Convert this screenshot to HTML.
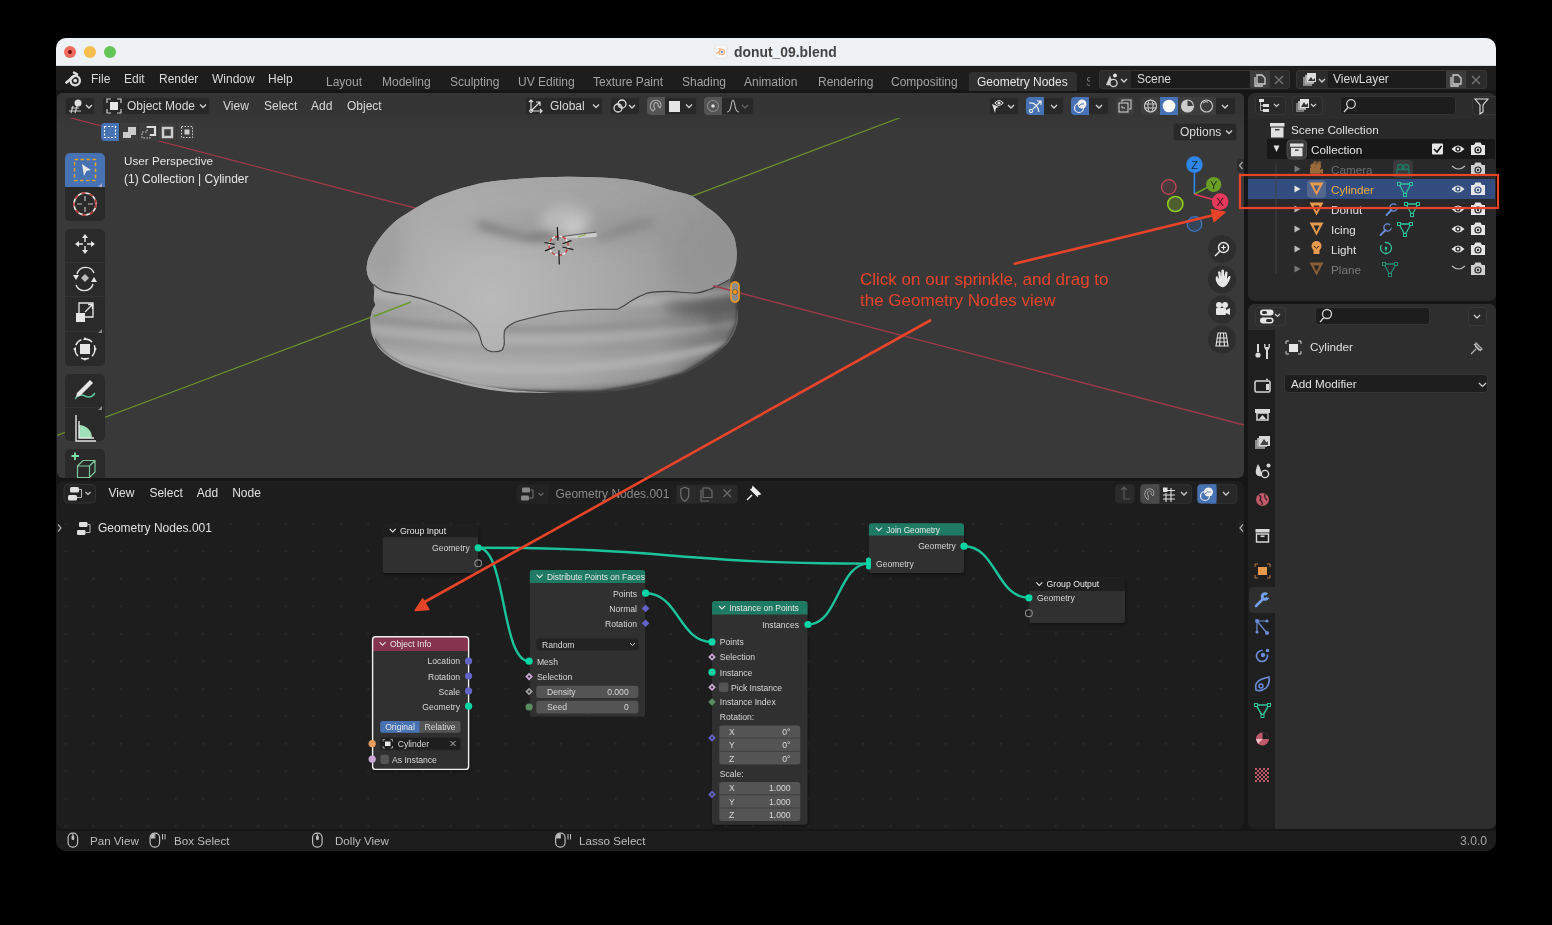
<!DOCTYPE html>
<html><head><meta charset="utf-8">
<style>
*{box-sizing:border-box;margin:0;padding:0}
html,body{width:1552px;height:925px;background:#000;overflow:hidden;font-family:"Liberation Sans",sans-serif;}
.a{position:absolute}
#win{position:absolute;left:56px;top:38px;width:1440px;height:813px;border-radius:10px;overflow:hidden;background:#161616}
#in{position:absolute;left:-56px;top:-38px;width:1552px;height:925px}
.t{position:absolute;will-change:transform;white-space:pre;color:#d9d9d9;font-size:12px;line-height:14px}
.btn{position:absolute;background:#282828;border-radius:4px;box-shadow:inset 0 0 0 1px #333}
</style></head><body>
<div id="win"><div id="in">
<!-- title bar -->
<div class="a" style="left:56px;top:38px;width:1440px;height:28px;background:#eff2f5"></div>
<div class="a" style="left:64px;top:46px;width:12px;height:12px;border-radius:50%;background:#ee6a5f"></div>
<div class="a" style="left:68px;top:50px;width:4px;height:4px;border-radius:50%;background:#7a1410"></div>
<div class="a" style="left:84px;top:46px;width:12px;height:12px;border-radius:50%;background:#f5be4f"></div>
<div class="a" style="left:104px;top:46px;width:12px;height:12px;border-radius:50%;background:#62c554"></div>
<svg class="a" style="left:714px;top:44px" width="14" height="15" viewBox="0 0 14 15"><rect x="1" y="1" width="12" height="13" rx="2" fill="#f8f8f8" stroke="#e2e2e2" stroke-width="0.8"/><circle cx="7.8" cy="8" r="2.6" fill="none" stroke="#f3b27a" stroke-width="1.2"/><path d="M2.5 9.5 L6 7 M5 4.5 L7.5 5.5" stroke="#f3b27a" stroke-width="1.2" stroke-linecap="round"/><circle cx="7.8" cy="8" r="1" fill="#4a6cc0"/></svg>
<div class="t" style="left:733.5px;top:44px;font-size:13.9px;font-weight:bold;color:#434343;line-height:16px">donut_09.blend</div>
<div class="a" style="left:56px;top:65px;width:1440px;height:1px;background:#d6d8da"></div>
<!-- top bar -->
<div class="a" style="left:56px;top:66px;width:1440px;height:24px;background:#1d1d1d"></div>


<!-- topbar content -->
<svg class="a" style="left:65px;top:71px" width="18" height="16" viewBox="0 0 18 16"><path d="M1.5 11.5 L8.5 5.5" stroke="#dedede" stroke-width="2.6" stroke-linecap="round"/><path d="M9 1.6 L12 3.4" stroke="#dedede" stroke-width="2.4" stroke-linecap="round"/><circle cx="10.2" cy="9.6" r="4.7" fill="none" stroke="#dedede" stroke-width="2.3"/><circle cx="10.2" cy="9.6" r="1.9" fill="#dedede"/></svg>
<div class="t" style="left:91px;top:72px">File</div>
<div class="t" style="left:124px;top:72px">Edit</div>
<div class="t" style="left:159px;top:72px">Render</div>
<div class="t" style="left:212px;top:72px">Window</div>
<div class="t" style="left:268px;top:72px">Help</div>
<div class="t" style="left:326px;top:74.5px;color:#a3a3a3">Layout</div>
<div class="t" style="left:382px;top:74.5px;color:#a3a3a3">Modeling</div>
<div class="t" style="left:450px;top:74.5px;color:#a3a3a3">Sculpting</div>
<div class="t" style="left:518px;top:74.5px;color:#a3a3a3">UV Editing</div>
<div class="t" style="left:593px;top:74.5px;color:#a3a3a3">Texture Paint</div>
<div class="t" style="left:682px;top:74.5px;color:#a3a3a3">Shading</div>
<div class="t" style="left:744px;top:74.5px;color:#a3a3a3">Animation</div>
<div class="t" style="left:818px;top:74.5px;color:#a3a3a3">Rendering</div>
<div class="t" style="left:891px;top:74.5px;color:#a3a3a3">Compositing</div>
<div class="a" style="left:969px;top:72px;width:108px;height:19px;background:#303030;border-radius:4px 4px 0 0"></div>
<div class="t" style="left:977px;top:74.5px;color:#e6e6e6">Geometry Nodes</div>
<div class="t" style="left:1086px;top:74.5px;color:#777;width:4px;overflow:hidden">S</div>
<!-- scene -->
<div class="a" style="left:1098.5px;top:69.5px;width:191px;height:19.5px;background:#2b2b2b;border-radius:4px;box-shadow:inset 0 0 0 1px #363636"></div>
<div class="a" style="left:1131px;top:70.5px;width:119px;height:17.5px;background:#1c1c1c"></div>
<div class="a" style="left:1250px;top:70.5px;width:20px;height:17.5px;background:#3d3d3d"></div>
<svg class="a" style="left:1103px;top:72px" width="30" height="16" viewBox="0 0 30 16"><path d="M3 13 L7 3.5 L9.5 10 Q8 13 6 13.5Z" fill="#d0d0d0"/><circle cx="12" cy="3.5" r="2" fill="#e0e0e0"/><circle cx="10.5" cy="11" r="3.6" fill="#2b2b2b" stroke="#d0d0d0" stroke-width="1.4"/><path d="M18 7 L21 10 L24 7" fill="none" stroke="#d0d0d0" stroke-width="1.4"/></svg>
<div class="t" style="left:1137px;top:72px">Scene</div>
<svg class="a" style="left:1252px;top:72px" width="16" height="16" viewBox="0 0 16 16"><path d="M5 3 H10 L13 6 V12 H5Z M3 5 V14 H11" fill="none" stroke="#d0d0d0" stroke-width="1.3"/></svg>
<svg class="a" style="left:1272px;top:73px" width="14" height="14" viewBox="0 0 14 14"><path d="M3 3 L11 11 M11 3 L3 11" stroke="#777" stroke-width="1.3"/></svg>
<div class="a" style="left:1296px;top:69.5px;width:191px;height:19.5px;background:#2b2b2b;border-radius:4px;box-shadow:inset 0 0 0 1px #363636"></div>
<div class="a" style="left:1328px;top:70.5px;width:118px;height:17.5px;background:#1c1c1c"></div>
<div class="a" style="left:1446px;top:70.5px;width:20px;height:17.5px;background:#3d3d3d"></div>
<svg class="a" style="left:1300px;top:72px" width="30" height="16" viewBox="0 0 30 16"><rect x="3" y="5" width="9" height="9" fill="#888"/><rect x="5" y="3" width="9" height="9" fill="#aaa"/><rect x="7" y="1" width="9" height="9" fill="#ddd"/><path d="M8 9 L11 5 L13 8 L15 6 V9Z" fill="#333"/><path d="M19 7 L22 10 L25 7" fill="none" stroke="#d0d0d0" stroke-width="1.4"/></svg>
<div class="t" style="left:1333px;top:72px">ViewLayer</div>
<svg class="a" style="left:1448px;top:72px" width="16" height="16" viewBox="0 0 16 16"><path d="M5 3 H10 L13 6 V12 H5Z M3 5 V14 H11" fill="none" stroke="#d0d0d0" stroke-width="1.3"/></svg>
<svg class="a" style="left:1469px;top:73px" width="14" height="14" viewBox="0 0 14 14"><path d="M3 3 L11 11 M11 3 L3 11" stroke="#777" stroke-width="1.3"/></svg>

<!-- viewport -->
<div class="a" id="vp" style="left:57px;top:93px;width:1187px;height:385px;background:#393939;border-radius:6px;overflow:hidden">
  <div class="a" style="left:0;top:0;width:1187px;height:40px;background:linear-gradient(#343434 0px,#353535 20px,#393939 36px)"></div>
</div>

<!-- viewport header content -->
<div class="btn" style="left:65px;top:97px;width:30px;height:18px"></div>
<svg class="a" style="left:67px;top:98px" width="28" height="16" viewBox="0 0 28 16"><path d="M2 13 H14 M4 10 H12 M6 8 L4 15 M10 8 L8 15" stroke="#ccc" stroke-width="1.2"/><circle cx="11" cy="5" r="3.5" fill="#ddd"/><path d="M19 7 L22 10 L25 7" fill="none" stroke="#d0d0d0" stroke-width="1.4"/></svg>
<div class="btn" style="left:102px;top:97px;width:108px;height:18px"></div>
<svg class="a" style="left:106px;top:98px" width="16" height="16" viewBox="0 0 16 16"><path d="M1 5 V1 H5 M11 1 H15 V5 M15 11 V15 H11 M5 15 H1 V11" fill="none" stroke="#ccc" stroke-width="1.2"/><rect x="4" y="4" width="8" height="8" fill="#e6e6e6"/></svg>
<div class="t" style="left:127px;top:99px">Object Mode</div>
<svg class="a" style="left:198px;top:101px" width="10" height="10" viewBox="0 0 10 10"><path d="M2 3.5 L5 6.5 L8 3.5" fill="none" stroke="#ccc" stroke-width="1.4"/></svg>
<div class="t" style="left:223px;top:99px">View</div>
<div class="t" style="left:264px;top:99px">Select</div>
<div class="t" style="left:311px;top:99px">Add</div>
<div class="t" style="left:347px;top:99px">Object</div>
<!-- center header -->
<div class="btn" style="left:525px;top:97px;width:78px;height:18px"></div>
<svg class="a" style="left:528px;top:98px" width="16" height="16" viewBox="0 0 16 16"><path d="M3 2 V13 H14 M3 13 L12 4 M1 4 L3 2 L5 4 M12 11 L14 13 L12 15 M8 4 H12 V8" fill="none" stroke="#ddd" stroke-width="1.2"/><circle cx="3" cy="13" r="1.5" fill="none" stroke="#ddd"/></svg>
<div class="t" style="left:550px;top:99px">Global</div>
<svg class="a" style="left:591px;top:101px" width="10" height="10" viewBox="0 0 10 10"><path d="M2 3.5 L5 6.5 L8 3.5" fill="none" stroke="#ccc" stroke-width="1.4"/></svg>
<div class="btn" style="left:610px;top:97px;width:30px;height:18px"></div>
<svg class="a" style="left:612px;top:98px" width="28" height="16" viewBox="0 0 28 16"><circle cx="6" cy="10" r="4" fill="none" stroke="#ddd" stroke-width="1.3"/><circle cx="10" cy="6" r="4" fill="none" stroke="#ddd" stroke-width="1.3"/><circle cx="8" cy="8" r="1" fill="#ddd"/><path d="M17 7 L20 10 L23 7" fill="none" stroke="#d0d0d0" stroke-width="1.4"/></svg>
<div class="btn" style="left:647px;top:97px;width:50px;height:18px"></div>
<div class="a" style="left:647px;top:97px;width:18px;height:18px;background:#545454;border-radius:4px 0 0 4px"></div>
<svg class="a" style="left:648px;top:98px" width="16" height="16" viewBox="0 0 16 16"><path d="M5 13 L3 11 Q1 6 5 3 Q9 1 12 4 Q14 7 12 10 L10 8 Q11 6 9 5 Q7 4 6 6 Q5 8 7 11Z" fill="none" stroke="#aaa" stroke-width="1.1"/></svg>
<div class="a" style="left:669px;top:101px;width:11px;height:11px;background:#e6e6e6"></div>
<svg class="a" style="left:684px;top:101px" width="10" height="10" viewBox="0 0 10 10"><path d="M2 3.5 L5 6.5 L8 3.5" fill="none" stroke="#ccc" stroke-width="1.4"/></svg>
<div class="btn" style="left:704px;top:97px;width:50px;height:18px"></div>
<div class="a" style="left:704px;top:97px;width:18px;height:18px;background:#545454;border-radius:4px 0 0 4px"></div>
<svg class="a" style="left:705px;top:98px" width="16" height="16" viewBox="0 0 16 16"><circle cx="8" cy="8" r="5.5" fill="none" stroke="#888" stroke-width="1.1"/><circle cx="8" cy="8" r="1.8" fill="#ddd"/></svg>
<svg class="a" style="left:726px;top:98px" width="28" height="16" viewBox="0 0 28 16"><path d="M1 14 Q4 14 5 8 Q6 2 7 2 Q8 2 9 8 Q10 14 13 14" fill="none" stroke="#bbb" stroke-width="1.1"/><path d="M16 7 L19 10 L22 7" fill="none" stroke="#666" stroke-width="1.2"/></svg>
<!-- right header -->
<div class="btn" style="left:989px;top:97px;width:30px;height:18px"></div>
<svg class="a" style="left:990px;top:98px" width="28" height="16" viewBox="0 0 28 16"><path d="M2 6 L9 9 L6 10 L5 15Z" fill="#ddd"/><path d="M5 5 Q9 0 13 5 Q9 10 5 5Z" fill="none" stroke="#ddd" stroke-width="1.2"/><circle cx="9" cy="5" r="1.6" fill="#ddd"/><path d="M18 7 L21 10 L24 7" fill="none" stroke="#d0d0d0" stroke-width="1.4"/></svg>
<div class="btn" style="left:1026px;top:97px;width:38px;height:18px"></div>
<div class="a" style="left:1026px;top:97px;width:18px;height:18px;background:#4772b3;border-radius:4px 0 0 4px"></div>
<svg class="a" style="left:1027px;top:98px" width="36" height="16" viewBox="0 0 36 16"><path d="M2 5 Q10 4 12 14" fill="none" stroke="#eee" stroke-width="1.2"/><circle cx="4" cy="13" r="1.6" fill="none" stroke="#eee" stroke-width="1.1"/><path d="M6 11 L14 3 M10 3 H14 V7" fill="none" stroke="#eee" stroke-width="1.2"/><path d="M24 7 L27 10 L30 7" fill="none" stroke="#d0d0d0" stroke-width="1.4"/></svg>
<div class="btn" style="left:1071px;top:97px;width:38px;height:18px"></div>
<div class="a" style="left:1071px;top:97px;width:18px;height:18px;background:#4772b3;border-radius:4px 0 0 4px"></div>
<svg class="a" style="left:1072px;top:98px" width="36" height="16" viewBox="0 0 36 16"><circle cx="7" cy="10" r="4.5" fill="none" stroke="#eee" stroke-width="1.2"/><circle cx="10" cy="6" r="4.5" fill="#eee"/><path d="M7 8 Q9 5 12 6" stroke="#4772b3" stroke-width="1" fill="none"/><path d="M24 7 L27 10 L30 7" fill="none" stroke="#d0d0d0" stroke-width="1.4"/></svg>
<div class="a" style="left:1116px;top:97px;width:18px;height:18px;background:#3d3d3d;border-radius:4px"></div>
<svg class="a" style="left:1117px;top:98px" width="16" height="16" viewBox="0 0 16 16"><path d="M5 4 V2 H14 V11 H12" fill="none" stroke="#ccc" stroke-width="1.1"/><rect x="2" y="5" width="9" height="9" fill="none" stroke="#ccc" stroke-width="1.1"/><path d="M5 8 V10 H8" stroke="#ccc" stroke-width="1" fill="none"/></svg>
<div class="btn" style="left:1141px;top:97px;width:95px;height:18px"></div>
<div class="a" style="left:1141px;top:97px;width:19px;height:18px;background:#3d3d3d;border-radius:4px 0 0 4px"></div>
<div class="a" style="left:1160px;top:97px;width:18px;height:18px;background:#4772b3"></div>
<div class="a" style="left:1178px;top:97px;width:38px;height:18px;background:#3d3d3d"></div>
<svg class="a" style="left:1142px;top:98px" width="94" height="16" viewBox="0 0 94 16"><circle cx="8.5" cy="8" r="6" fill="none" stroke="#ccc" stroke-width="1.1"/><ellipse cx="8.5" cy="8" rx="2.6" ry="6" fill="none" stroke="#ccc" stroke-width="1"/><path d="M2.5 6 H14.5 M2.5 10 H14.5" stroke="#ccc" stroke-width="1"/><circle cx="27" cy="8" r="6.3" fill="#fff"/><circle cx="45.5" cy="8" r="6" fill="none" stroke="#ccc" stroke-width="1.1"/><path d="M45.5 2 V8 H51.5 A6 6 0 0 1 45.5 14 A6 6 0 0 1 39.5 8 A6 6 0 0 1 45.5 2Z" fill="#ccc"/><circle cx="64.5" cy="8" r="6" fill="none" stroke="#ccc" stroke-width="1.1"/><path d="M61 5 Q63 3 66 4" stroke="#ccc" fill="none"/><path d="M80 7 L83 10 L86 7" fill="none" stroke="#d0d0d0" stroke-width="1.4"/></svg>
<div class="btn" style="left:1173px;top:123px;width:64px;height:18px"></div>
<div class="t" style="left:1180px;top:125px">Options</div>
<svg class="a" style="left:1224px;top:127px" width="10" height="10" viewBox="0 0 10 10"><path d="M2 3.5 L5 6.5 L8 3.5" fill="none" stroke="#ccc" stroke-width="1.4"/></svg>
<!-- viewport scene svg -->
<svg class="a" style="left:57px;top:93px" width="1187" height="385" viewBox="57 93 1187 385">
<defs>
<clipPath id="vpc"><rect x="57" y="118" width="1187" height="360"/></clipPath>
<filter id="bl3" filterUnits="userSpaceOnUse" x="300" y="120" width="500" height="330"><feGaussianBlur stdDeviation="3"/></filter>
<filter id="bl6" filterUnits="userSpaceOnUse" x="300" y="120" width="500" height="330"><feGaussianBlur stdDeviation="6"/></filter>
<filter id="bl10" filterUnits="userSpaceOnUse" x="300" y="120" width="500" height="330"><feGaussianBlur stdDeviation="10"/></filter>
<filter id="bl1" filterUnits="userSpaceOnUse" x="300" y="120" width="500" height="330"><feGaussianBlur stdDeviation="0.8"/></filter>
<linearGradient id="bodyg" x1="0" y1="0" x2="1" y2="0">
<stop offset="0" stop-color="#9c9c9c"/><stop offset="0.3" stop-color="#adadad"/><stop offset="0.62" stop-color="#a9a9a9"/><stop offset="0.85" stop-color="#939393"/><stop offset="1" stop-color="#6a6a6a"/>
</linearGradient>
<radialGradient id="icg" cx="0.42" cy="0.72" r="0.7">
<stop offset="0" stop-color="#bcbcbc"/><stop offset="0.5" stop-color="#acacac"/><stop offset="1" stop-color="#949494"/>
</radialGradient>
<clipPath id="bodyclip"><path id="bodyp" d="M367.6,268 C366,258 372,244 382,233 C392,222 404,214 431,198 C450,188 480,180 512,177.6 C540,175.5 575,174 621,179 C645,182 670,188 691,195 C705,202 725,215 732,230 C737,243 737,258 736,268 C735,276 733,280 729,284 C735,292 738,300 737,306 C737,318 736,327 734.6,327.6 C730,340 725,345 721,349 C712,358 705,362 694,368 C680,376 665,381 653.5,384 C635,389 620,391 607.6,392.4 C590,394 575,394 560,393 C540,392 525,391 512,390 C495,388 485,386 471.6,384 C455,381 445,377 431,373.5 C418,369 405,365 396,360 C385,353 380,348 377,344 C373,335 371.6,328 371.6,322 C371.6,315 373,310 373,306 C374,298 374,294 374,290 C372,285 369,275 367.6,268Z"/></clipPath>
</defs>
<g clip-path="url(#vpc)">
<!-- axis lines -->
<line x1="57" y1="114.3" x2="1244" y2="425" stroke="#9b3a48" stroke-width="1.3"/>
<line x1="57" y1="435.5" x2="900" y2="117.7" stroke="#6b8a2c" stroke-width="1.3"/>
<!-- donut body -->
<defs>
<clipPath id="bodyclip"><path d="M367,264.5 C366,270 367,279 373.7,284.4 C375,288 374,295 373.7,299.4 C374,302 375.5,304 375,305.6 C373,309 371,312 371.2,314.3 C370,318 370,322 370.4,324 C370.5,330 371.5,335 373.7,339 C377,346 380,350 384.9,354 C392,360 398,363 404.8,366.5 C415,371 425,374 434.6,376.5 C447,380 460,384 472,386.4 C490,390 505,392 520,392.6 C550,393.5 580,392.5 600,391.4 C607,391 613,390.7 620,390 C630,388 640,386 649.8,384 C661,380.5 672,377 682,374 C692,369.5 701,364 709.5,359 C716,354 721,349 726.9,344 C731,339 733.5,334 735.6,329.2 C737,325 738,322 738,319.3 C738,313 737.5,308 736.8,304.3 C735,295 732,285 729.4,279.5 C731,276 733,272 734.3,269.5 C735.5,266 736.3,264 736.3,262 C736.8,258 737,255 736.8,252 C736.5,247 735.5,241 734.3,237.2 C731.5,231 728,226 724.4,222.2 C719,216 713,211 707,207.3 C702,203 697,199 692,196 C685,193 677,191.5 669.7,189.9 C659,187 648,183 637.3,181.2 C625,179 612,178 600,177.5 C573,176 547,176.5 520,178.7 C508,179.5 496,180.5 484.4,182.4 C476,184 468,186.5 459.5,188.7 C451,191.5 443,194 434.6,197.4 C428,200.5 421,204.5 414.7,208.6 C409,212 403,216 397.3,219.8 C392,224 387,229 382.4,234.7 C378,240 374,246 371.2,252 C369,256 367.5,260 367,264.5Z"/></clipPath>
<clipPath id="icclip"><path d="M367,264.5 C366,270 367,279 373.7,284.4 C376,287 379,289 382.4,290.6 C391,293 400,294 409.8,295.6 C418,297.5 426,300 434.6,303 C441,305.5 448,308.5 454.5,311.8 C460,315 465,318 469.5,321.7 C473,325 476,328 478.2,331.7 C480,336 481,340 481.9,344 C484,348 487,351 491.8,351.6 C496,352 499.5,351.5 501.8,350.3 C504,347.5 504.5,345 504.3,341.6 C504,338 504,335 504.3,331.7 C505,329 507,327 509.3,325.5 C512,323.5 516,321.5 520,320.5 C530,318.5 545,314 560,311.5 C575,310 590,309.5 600,309.3 C605,309.3 611,309.3 617.4,309.3 C622,307.5 626,304.5 629.9,301.8 C635,298.5 641,295.5 647.3,293.1 C654,291.5 662,291.2 669.7,291.4 C678,291.8 686,292.8 694.5,293.1 C700,293 705,291 709.5,289.4 C716,287 723,283 729.4,279.5 C731,276 733,272 734.3,269.5 C735.5,266 736.3,264 736.3,262 C736.8,258 737,255 736.8,252 C736.5,247 735.5,241 734.3,237.2 C731.5,231 728,226 724.4,222.2 C719,216 713,211 707,207.3 C702,203 697,199 692,196 C685,193 677,191.5 669.7,189.9 C659,187 648,183 637.3,181.2 C625,179 612,178 600,177.5 C573,176 547,176.5 520,178.7 C508,179.5 496,180.5 484.4,182.4 C476,184 468,186.5 459.5,188.7 C451,191.5 443,194 434.6,197.4 C428,200.5 421,204.5 414.7,208.6 C409,212 403,216 397.3,219.8 C392,224 387,229 382.4,234.7 C378,240 374,246 371.2,252 C369,256 367.5,260 367,264.5Z"/></clipPath>
<linearGradient id="bodyg2" x1="367" y1="0" x2="738" y2="0" gradientUnits="userSpaceOnUse">
<stop offset="0" stop-color="#9e9e9e"/><stop offset="0.25" stop-color="#aaaaaa"/><stop offset="0.55" stop-color="#a6a6a6"/><stop offset="0.78" stop-color="#989898"/><stop offset="0.92" stop-color="#828282"/><stop offset="1" stop-color="#606060"/>
</linearGradient>
<radialGradient id="rdark" cx="745" cy="325" r="85" gradientUnits="userSpaceOnUse"><stop offset="0" stop-color="#555" stop-opacity="0.75"/><stop offset="0.6" stop-color="#666" stop-opacity="0.35"/><stop offset="1" stop-color="#777" stop-opacity="0"/></radialGradient>
<radialGradient id="icg2" cx="490" cy="300" r="260" gradientUnits="userSpaceOnUse">
<stop offset="0" stop-color="#bababa"/><stop offset="0.35" stop-color="#adadad"/><stop offset="0.7" stop-color="#9e9e9e"/><stop offset="1" stop-color="#939393"/>
</radialGradient>
</defs>
<path d="M367,264.5 C366,270 367,279 373.7,284.4 C375,288 374,295 373.7,299.4 C374,302 375.5,304 375,305.6 C373,309 371,312 371.2,314.3 C370,318 370,322 370.4,324 C370.5,330 371.5,335 373.7,339 C377,346 380,350 384.9,354 C392,360 398,363 404.8,366.5 C415,371 425,374 434.6,376.5 C447,380 460,384 472,386.4 C490,390 505,392 520,392.6 C550,393.5 580,392.5 600,391.4 C607,391 613,390.7 620,390 C630,388 640,386 649.8,384 C661,380.5 672,377 682,374 C692,369.5 701,364 709.5,359 C716,354 721,349 726.9,344 C731,339 733.5,334 735.6,329.2 C737,325 738,322 738,319.3 C738,313 737.5,308 736.8,304.3 C735,295 732,285 729.4,279.5 C731,276 733,272 734.3,269.5 C735.5,266 736.3,264 736.3,262 C736.8,258 737,255 736.8,252 C736.5,247 735.5,241 734.3,237.2 C731.5,231 728,226 724.4,222.2 C719,216 713,211 707,207.3 C702,203 697,199 692,196 C685,193 677,191.5 669.7,189.9 C659,187 648,183 637.3,181.2 C625,179 612,178 600,177.5 C573,176 547,176.5 520,178.7 C508,179.5 496,180.5 484.4,182.4 C476,184 468,186.5 459.5,188.7 C451,191.5 443,194 434.6,197.4 C428,200.5 421,204.5 414.7,208.6 C409,212 403,216 397.3,219.8 C392,224 387,229 382.4,234.7 C378,240 374,246 371.2,252 C369,256 367.5,260 367,264.5Z" fill="url(#bodyg2)"/>
<g clip-path="url(#bodyclip)">
<rect x="600" y="270" width="150" height="130" fill="url(#rdark)"/>
<g filter="url(#bl3)">
<path d="M365 292 Q555 318 745 290" stroke="#b9b9b9" stroke-width="8" fill="none" opacity="0.7"/>
<path d="M365 318 Q555 343 745 312" stroke="#878787" stroke-width="5" fill="none" opacity="0.85"/>
<path d="M365 329 Q555 354 745 322" stroke="#b4b4b4" stroke-width="5" fill="none" opacity="0.8"/>
<path d="M365 338 Q555 366 745 330" stroke="#939393" stroke-width="4" fill="none" opacity="0.75"/>
<path d="M365 352 Q555 392 745 340" stroke="#b6b6b6" stroke-width="9" fill="none" opacity="0.8"/>
</g>
<g filter="url(#bl6)">
<path d="M660 302 C690 302 715 300 745 292 L745 316 C725 318 700 316 675 312Z" fill="#5a5a5a" opacity="0.7"/>
<path d="M708 302 L718 332" stroke="#4a4a4a" stroke-width="6" fill="none" opacity="0.5"/>
</g>
<g filter="url(#bl3)">
<path d="M470,392 C520,396 600,394 661,383 C690,375 716,356 728,344 C735,334 740,322 740,310" stroke="#505050" stroke-width="8" fill="none" opacity="0.5"/>
</g>
<path d="M373.7,339 C377,346 380,350 384.9,354 C392,360 398,363 404.8,366.5 C425,374 447,380 472,386.4 C505,392 550,393.5 600,391.4 C630,388 661,380.5 682,374 C701,364 716,354 726.9,344 C733.5,334 738,322 738,319.3 C738,313 737.5,308 736.8,304.3" stroke="#3e3e3e" stroke-width="3" fill="none" filter="url(#bl1)"/>
</g>
<path d="M367,264.5 C366,270 367,279 373.7,284.4 C376,287 379,289 382.4,290.6 C391,293 400,294 409.8,295.6 C418,297.5 426,300 434.6,303 C441,305.5 448,308.5 454.5,311.8 C460,315 465,318 469.5,321.7 C473,325 476,328 478.2,331.7 C480,336 481,340 481.9,344 C484,348 487,351 491.8,351.6 C496,352 499.5,351.5 501.8,350.3 C504,347.5 504.5,345 504.3,341.6 C504,338 504,335 504.3,331.7 C505,329 507,327 509.3,325.5 C512,323.5 516,321.5 520,320.5 C530,318.5 545,314 560,311.5 C575,310 590,309.5 600,309.3 C605,309.3 611,309.3 617.4,309.3 C622,307.5 626,304.5 629.9,301.8 C635,298.5 641,295.5 647.3,293.1 C654,291.5 662,291.2 669.7,291.4 C678,291.8 686,292.8 694.5,293.1 C700,293 705,291 709.5,289.4 C716,287 723,283 729.4,279.5 C731,276 733,272 734.3,269.5 C735.5,266 736.3,264 736.3,262 C736.8,258 737,255 736.8,252 C736.5,247 735.5,241 734.3,237.2 C731.5,231 728,226 724.4,222.2 C719,216 713,211 707,207.3 C702,203 697,199 692,196 C685,193 677,191.5 669.7,189.9 C659,187 648,183 637.3,181.2 C625,179 612,178 600,177.5 C573,176 547,176.5 520,178.7 C508,179.5 496,180.5 484.4,182.4 C476,184 468,186.5 459.5,188.7 C451,191.5 443,194 434.6,197.4 C428,200.5 421,204.5 414.7,208.6 C409,212 403,216 397.3,219.8 C392,224 387,229 382.4,234.7 C378,240 374,246 371.2,252 C369,256 367.5,260 367,264.5Z" fill="url(#icg2)"/>
<g clip-path="url(#icclip)">
<g filter="url(#bl10)">
<ellipse cx="700" cy="255" rx="35" ry="40" fill="#929292" opacity="0.7"/>
<ellipse cx="385" cy="250" rx="18" ry="35" fill="#9a9a9a" opacity="0.6"/>
<ellipse cx="600" cy="188" rx="110" ry="10" fill="#a6a6a6" opacity="0.5"/>
<ellipse cx="650" cy="230" rx="40" ry="12" fill="#999" opacity="0.6"/>
</g>
<g filter="url(#bl10)">
<path d="M440 225 C480 228 515 234 540 240 L600 240 C620 234 650 228 680 224 C640 214 600 212 560 212 C510 213 470 218 440 225Z" fill="#8e8e8e" opacity="0.55"/>
</g>
<g filter="url(#bl6)">
<ellipse cx="566" cy="220" rx="26" ry="15" fill="#bcbcbc" opacity="0.9"/>
</g>
<filter id="bl4" filterUnits="userSpaceOnUse" x="300" y="120" width="500" height="330"><feGaussianBlur stdDeviation="4.2"/></filter>
<g filter="url(#bl4)">
<ellipse cx="573" cy="226" rx="10" ry="8" fill="#c8c8c8" opacity="0.9"/>
<path d="M480 221 C497 226 515 231 529 235 L545 239 L525 241 C510 237 490 232 476 228Z" fill="#6e6e6e" opacity="0.7"/>
<path d="M597 237 C610 230 625 224 650 218 L654 225 C630 231 612 238 600 241Z" fill="#7c7c7c" opacity="0.65"/>
<ellipse cx="542" cy="237" rx="16" ry="3" fill="#555" opacity="0.7"/>
</g>
</g>
<path d="M373.7,284.4 C376,287 379,289 382.4,290.6 C391,293 400,294 409.8,295.6 C418,297.5 426,300 434.6,303 C441,305.5 448,308.5 454.5,311.8 C460,315 465,318 469.5,321.7 C473,325 476,328 478.2,331.7 C480,336 481,340 481.9,344 C484,348 487,351 491.8,351.6 C496,352 499.5,351.5 501.8,350.3 C504,347.5 504.5,345 504.3,341.6 C504,338 504,335 504.3,331.7 C505,329 507,327 509.3,325.5 C512,323.5 516,321.5 520,320.5 C530,318.5 545,314 560,311.5 C575,310 590,309.5 600,309.3 C605,309.3 611,309.3 617.4,309.3 C622,307.5 626,304.5 629.9,301.8 C635,298.5 641,295.5 647.3,293.1 C654,291.5 662,291.2 669.7,291.4 C678,291.8 686,292.8 694.5,293.1 C700,293 705,291 709.5,289.4 C716,287 723,283 729.4,279.5" fill="none" stroke="#444" stroke-width="1.1"/>
<path d="M562.5 236.7 C575 235 588 233 596 232.2 C597.5 234 597 236 596 236.9 C585 237.5 572 238.2 563.8 238.6Z" fill="#cbcbcb"/>
<path d="M555 237.5 C570 235.5 586 233.2 596 232.2" stroke="#505050" stroke-width="0.9" fill="none"/>
<line x1="578" y1="237" x2="586" y2="234.5" stroke="#8cb050" stroke-width="1.1"/>
<!-- axis over donut -->
<line x1="373.5" y1="316.5" x2="410.8" y2="302" stroke="#6b9a2c" stroke-width="1.4"/>
<line x1="713" y1="285.7" x2="738" y2="292.2" stroke="#9b3a48" stroke-width="1.4"/>
<!-- 3d cursor -->
<circle cx="558.6" cy="245.7" r="9.6" fill="none" stroke="#e8e8e8" stroke-width="1.4" stroke-dasharray="3.77 3.77"/>
<circle cx="558.6" cy="245.7" r="9.6" fill="none" stroke="#d03a3a" stroke-width="1.4" stroke-dasharray="3.77 3.77" stroke-dashoffset="3.77"/>
<path d="M557.3 227 L558 240.6 M558.9 250.2 L559.3 264.4 M544.4 242.5 L554.7 244.4 M545 250.9 L554.7 247 M562.5 243.8 L571.5 240.6 M562.5 247 L573.4 249.6" stroke="#1a1a1a" stroke-width="1.2"/>
<!-- sprinkle object -->
<rect x="731" y="282" width="8" height="20" rx="4" fill="#8c8c8c" stroke="#f39a1e" stroke-width="1.6"/>
<circle cx="735" cy="292" r="2.4" fill="#f39a1e" stroke="#3a2a10" stroke-width="0.5"/>
</g>
<!-- gizmo -->
<circle cx="1168.8" cy="187" r="7.3" fill="#4b3a3e" stroke="#c74659" stroke-width="1.3"/>
<circle cx="1175.3" cy="204" r="7.6" fill="#4f5f30" stroke="#8fd11a" stroke-width="1.5"/>
<circle cx="1194.5" cy="224" r="7.3" fill="#364559" stroke="#3a78c8" stroke-width="1.3"/>
<line x1="1194.3" y1="194.3" x2="1194.5" y2="170" stroke="#2f86e6" stroke-width="1.6"/>
<line x1="1194.3" y1="194.3" x2="1208" y2="187" stroke="#6a9f25" stroke-width="1.6"/>
<line x1="1194.3" y1="194.3" x2="1213" y2="199.5" stroke="#e6385a" stroke-width="1.6"/>
<circle cx="1194.5" cy="164.6" r="8.3" fill="#2f86e6"/>
<circle cx="1213.7" cy="184.5" r="7.6" fill="#6a9f25"/>
<circle cx="1220.2" cy="201.6" r="8.3" fill="#e6385a"/>
<text x="1194.5" y="168.6" font-family="Liberation Sans" font-size="11" text-anchor="middle" fill="#0f2740">Z</text>
<text x="1213.7" y="188.5" font-family="Liberation Sans" font-size="11" text-anchor="middle" fill="#1f3208">Y</text>
<text x="1220.2" y="205.6" font-family="Liberation Sans" font-size="11" text-anchor="middle" fill="#42101b">X</text>
<!-- nav buttons -->
<circle cx="1222" cy="249" r="14" fill="#2e2e2e"/>
<circle cx="1222" cy="279.5" r="14" fill="#2e2e2e"/>
<circle cx="1222" cy="309.5" r="14" fill="#2e2e2e"/>
<circle cx="1222" cy="339.5" r="14" fill="#2e2e2e"/>
<g stroke="#e6e6e6" fill="none" stroke-width="1.5">
<circle cx="1223.5" cy="247.5" r="5"/><path d="M1219.8 251.2 L1215 256"/><path d="M1223.5 245 V250 M1221 247.5 H1226" stroke-width="1.2"/>
</g>
<path d="M1216 281 Q1215 277 1217 276 L1219 279 L1218 272 Q1219 270.5 1220.5 272 L1221 277 L1221.5 270 Q1223 269 1224 270.5 L1224 277 L1225.5 271.5 Q1227 271 1227.5 272.5 L1227 279 L1229 276 Q1231 275.5 1230.5 277.5 Q1228 285 1224 287 Q1219 288 1216 281Z" fill="#e6e6e6"/>
<g fill="#e6e6e6"><circle cx="1219" cy="305" r="3"/><circle cx="1225" cy="305" r="3"/><rect x="1216" y="308" width="10" height="7" rx="1"/><path d="M1226 310 L1230 308 V315 L1226 313Z"/></g>
<path d="M1216 346 L1218 333 H1226 L1228 346Z M1217 338 H1227 M1216.5 342 H1227.5 M1220.5 333 L1219.5 346 M1223.5 333 L1224.5 346" fill="none" stroke="#e6e6e6" stroke-width="1.1"/>
<!-- collapse tab -->
<path d="M1244 159 h-5 a2 2 0 0 0 -2 2 v9 a2 2 0 0 0 2 2 h5Z" fill="#2c2c2c"/>
<path d="M1242.5 162 L1239.5 165.5 L1242.5 169" fill="none" stroke="#aaa" stroke-width="1.2"/>
</svg>
<!-- select mode buttons -->
<div class="a" style="left:101px;top:123px;width:94px;height:18px;background:#3d3d3d;border-radius:4px"></div>
<div class="a" style="left:101px;top:123px;width:18px;height:18px;background:#4772b3;border-radius:4px 0 0 4px"></div>
<div class="a" style="left:119px;top:123px;width:1px;height:18px;background:#333"></div>
<div class="a" style="left:138px;top:123px;width:1px;height:18px;background:#333"></div>
<div class="a" style="left:157px;top:123px;width:1px;height:18px;background:#333"></div>
<div class="a" style="left:176px;top:123px;width:1px;height:18px;background:#333"></div>
<svg class="a" style="left:101px;top:123px" width="94" height="18" viewBox="0 0 94 18"><rect x="3.5" y="3.5" width="11" height="11" fill="none" stroke="#fff" stroke-width="1.2" stroke-dasharray="2 1.5"/><path d="M22 9 H27 V4 H35 V12 H30 V15 H22Z" fill="#ccc"/><path d="M41 9 H46 V4 H54 V12 H49 V15 H41Z" fill="none" stroke="#ccc" stroke-width="1.1" stroke-dasharray="1.6 1.4"/><path d="M46 4 H54 V12 H49" fill="none" stroke="#ddd" stroke-width="2.2"/><rect x="62" y="5" width="9" height="9" fill="none" stroke="#ccc" stroke-width="2.5"/><rect x="65" y="8" width="3" height="3" fill="#3d3d3d"/><rect x="80.5" y="3.5" width="11" height="11" fill="none" stroke="#ccc" stroke-width="1" stroke-dasharray="1.6 1.4"/><rect x="83.5" y="6.5" width="5" height="5" fill="#ccc"/></svg>


<!-- overlay text -->
<div class="t" style="left:124px;top:154px;font-size:11.7px;color:#e6e6e6">User Perspective</div>
<div class="t" style="left:124px;top:171.5px;font-size:12px;color:#e6e6e6">(1) Collection | Cylinder</div>
<!-- toolbar -->
<div class="a" style="left:65px;top:153px;width:40px;height:68px;background:#2a2a2a;border-radius:5px"></div>
<div class="a" style="left:65px;top:153px;width:40px;height:34px;background:#4772b3;border-radius:5px 5px 0 0"></div>
<div class="a" style="left:65px;top:229px;width:40px;height:137px;background:#2a2a2a;border-radius:5px"></div>
<div class="a" style="left:65px;top:262px;width:40px;height:1px;background:#333"></div>
<div class="a" style="left:65px;top:296px;width:40px;height:1px;background:#333"></div>
<div class="a" style="left:65px;top:331px;width:40px;height:1px;background:#333"></div>
<div class="a" style="left:65px;top:374px;width:40px;height:67px;background:#2a2a2a;border-radius:5px"></div>
<div class="a" style="left:65px;top:407px;width:40px;height:1px;background:#333"></div>
<div class="a" style="left:65px;top:449px;width:40px;height:29px;background:#2a2a2a;border-radius:5px 5px 0 0"></div>
<svg class="a" style="left:65px;top:153px" width="40" height="325" viewBox="0 0 40 325">
<rect x="9.5" y="6.5" width="21" height="21" fill="none" stroke="#f0a41e" stroke-width="1.5" stroke-dasharray="3.5 2.5"/>
<path d="M17 11 L26 17 L21.5 18 L19 23Z" fill="#e6e6e6"/>
<path d="M37 30 L33 34 H37Z" fill="#aac"/>
<circle cx="20" cy="51" r="11" fill="none" stroke="#e6e6e6" stroke-width="1.6"/>
<circle cx="20" cy="51" r="11" fill="none" stroke="#b83333" stroke-width="1.6" stroke-dasharray="4 4"/>
<path d="M20 43 V48 M20 54 V59 M12 51 H17 M23 51 H28" stroke="#bbb" stroke-width="1.2"/>
<g fill="#e6e6e6"><path d="M20 81 L17 85 H23Z M20 101 L17 97 H23Z M10 91 L14 88 V94Z M30 91 L26 88 V94Z"/></g>
<path d="M20 85 V89 M20 93 V97 M14 91 H18 M22 91 H26" stroke="#e6e6e6" stroke-width="1.4"/>
<path d="M12 121 A9 9 0 0 1 29 120 M28 131 A9 9 0 0 1 11 132" fill="none" stroke="#e6e6e6" stroke-width="1.4"/>
<path d="M8 122 L14 122 L11 127Z M26 129 L32 129 L29 124Z" fill="#e6e6e6"/>
<path d="M20 121 L24 125 L20 129 L16 125Z" fill="#bbb"/>
<rect x="11" y="160" width="9" height="9" fill="#e6e6e6"/>
<path d="M14 160 V150 H28 V164 H20" fill="none" stroke="#e6e6e6" stroke-width="1.3"/>
<path d="M20 159 L27 152 M23 151.5 H27.5 V156" fill="none" stroke="#e6e6e6" stroke-width="1.3"/>
<path d="M37 176 L33 180 H37Z" fill="#888"/>
<circle cx="20" cy="196" r="10" fill="none" stroke="#e6e6e6" stroke-width="1.4" stroke-dasharray="8 3.7"/>
<rect x="15" y="191" width="10" height="10" fill="#e6e6e6"/>
<path d="M20 184 L18 187 H22Z M20 208 L18 205 H22Z M8 196 L11 194 V198Z M32 196 L29 194 V198Z" fill="#e6e6e6"/>
<path d="M10 246 Q14 240 20 243 Q26 246 30 240" fill="none" stroke="#5fc9a0" stroke-width="1.4"/>
<path d="M12 240 L25 227 L28 230 L15 243 L11 244Z" fill="#e6e6e6"/>
<path d="M37 253 L33 257 H37Z" fill="#888"/>
<path d="M11 262 V288 H31" fill="none" stroke="#e6e6e6" stroke-width="1.4"/>
<path d="M14 285 V272 A13 13 0 0 1 27 285Z" fill="#9fe0b9"/>
<path d="M14 268 V285 H29" fill="none" stroke="#e6e6e6" stroke-width="1.4"/>
<path d="M10 299.5 V307 M6.5 303 H14" stroke="#7ee0a8" stroke-width="1.8"/>
<path d="M12.5 313 L18 307.5 H30 V319 L24.5 324.5 H12.5Z M12.5 313 H24.5 V324.5 M24.5 313 L30 307.5" fill="none" stroke="#7ec79a" stroke-width="1.2"/>
</svg>
<!-- outliner -->
<div class="a" style="left:1248px;top:93px;width:248px;height:208px;background:#292929;border-radius:7px;overflow:hidden">
  <div class="a" style="left:0;top:0;width:248px;height:26px;background:#2c2c2c"></div>
</div>
<div class="btn" style="left:1255px;top:96px;width:31px;height:19px;background:#292929;box-shadow:inset 0 0 0 1px #363636"></div>
<div class="btn" style="left:1292px;top:96px;width:31px;height:19px;background:#292929;box-shadow:inset 0 0 0 1px #363636"></div>
<div class="btn" style="left:1340px;top:96px;width:116px;height:19px;background:#1d1d1d;box-shadow:inset 0 0 0 1px #333"></div>
<div class="btn" style="left:1472px;top:96px;width:30px;height:19px;background:#292929;box-shadow:inset 0 0 0 1px #363636"></div>
<div class="a" style="left:1267px;top:139px;width:228px;height:20px;background:#181818"></div>
<div class="a" style="left:1248px;top:179px;width:247px;height:20px;background:#334d80"></div>
<svg class="a" style="left:1248px;top:93px" width="248" height="205" viewBox="1248 93 248 205">
<g fill="#e0e0e0"><rect x="1259" y="99" width="5" height="3"/><rect x="1263" y="104" width="6" height="3"/><rect x="1263" y="109" width="6" height="3"/></g>
<path d="M1260.5 102 V110.5 H1263 M1260.5 105.5 H1263" stroke="#aaa" fill="none" stroke-width="1"/>
<path d="M1274 104 L1276.5 106.5 L1279 104" fill="none" stroke="#ccc" stroke-width="1.2"/>
<rect x="1296" y="103" width="8" height="9" fill="#777"/><rect x="1298" y="101" width="8" height="9" fill="#aaa"/><rect x="1300" y="99" width="9" height="9" fill="#e0e0e0"/><path d="M1301 107 L1304 102 L1306 105 L1308 103 V107Z" fill="#333"/>
<path d="M1311 104 L1313.5 106.5 L1316 104" fill="none" stroke="#ccc" stroke-width="1.2"/>
<circle cx="1351" cy="104" r="4.3" fill="none" stroke="#d0d0d0" stroke-width="1.3"/><path d="M1348 107.5 L1344 112" stroke="#d0d0d0" stroke-width="1.3"/>
<path d="M1475 99 H1488 L1483 105 V112 L1480 114 V105Z" fill="none" stroke="#e0e0e0" stroke-width="1.1"/>
<circle cx="1497" cy="105" r="0.8" fill="#aaa"/>
<!-- scene collection -->
<rect x="1270" y="123" width="14.5" height="3.5" fill="#e0e0e0"/><rect x="1271" y="127.5" width="12.5" height="10" fill="#e0e0e0"/><rect x="1275" y="129" width="4.5" height="1.4" fill="#333"/>
<!-- collection -->
<path d="M1273.5 145.5 H1279.5 L1276.5 152Z" fill="#e0e0e0"/>
<rect x="1287" y="140" width="19.5" height="19" rx="4" fill="#3a3a3a" stroke="#555" stroke-width="0.8"/>
<rect x="1290" y="143.5" width="13.5" height="3.2" fill="#e0e0e0"/><rect x="1291" y="147.8" width="11.5" height="8.5" fill="#e0e0e0"/><rect x="1295" y="149.5" width="3.5" height="1.3" fill="#333"/>
<rect x="1432" y="143.5" width="11" height="11" rx="1" fill="#e6e6e6"/><path d="M1434 149 L1437 152 L1441.5 146" fill="none" stroke="#111" stroke-width="1.6"/>
<path d="M1451.5 149 Q1458.0 142 1464.5 149 Q1458.0 156 1451.5 149Z" fill="#e6e6e6"/><circle cx="1458.0" cy="149" r="2.6" fill="#181818"/><circle cx="1458.0" cy="149" r="1.3" fill="#e6e6e6"/><path d="M1471 145 H1474 L1475.5 142.5 H1480.5 L1482 145 H1485 V155 H1471Z" fill="#e6e6e6"/><circle cx="1478" cy="150" r="3.6" fill="#181818"/><circle cx="1478" cy="150" r="2.4" fill="#e6e6e6"/><circle cx="1478" cy="150" r="1.2" fill="#181818"/>
<!-- tree line -->
<line x1="1276" y1="164.5" x2="1276" y2="273.5" stroke="#444" stroke-width="1"/>
<path d="M1294.5 165.5 L1300.5 169 L1294.5 172.5Z" fill="#777"/>
<g opacity="0.45"><path d="M1312 165 h3 a2 2 0 1 1 0.1 0 h4 a2 2 0 1 1 0.1 0 h1 v5 l2 -1 v4 l-2 -1 v2 h-10Z" fill="#e89a4c"/></g>
<g><circle cx="1313" cy="166" r="2.6" fill="#9a6a3a"/><circle cx="1318.5" cy="166" r="2.6" fill="#9a6a3a"/><rect x="1310" y="168" width="10" height="5" fill="#9a6a3a"/><path d="M1320 170 L1323 168.5 V174 L1320 172.5Z" fill="#9a6a3a"/></g>
<rect x="1393" y="160" width="20" height="18" rx="4" fill="#3b3b3b"/>
<g stroke="#1e7a62" stroke-width="1.3" fill="none"><circle cx="1400" cy="167" r="2.5"/><circle cx="1406" cy="167" r="2.5"/><rect x="1397" y="169.5" width="12" height="5"/></g>
<path d="M1452 166 Q1458.5 172 1465 166" fill="none" stroke="#bbb" stroke-width="1.1"/>
<path d="M1471 165 H1474 L1475.5 162.5 H1480.5 L1482 165 H1485 V175 H1471Z" fill="#d0d0d0"/><circle cx="1478" cy="170" r="3.6" fill="#282828"/><circle cx="1478" cy="170" r="2.4" fill="#d0d0d0"/><circle cx="1478" cy="170" r="1.2" fill="#282828"/>
<!-- cylinder -->
<path d="M1294.5 185.5 L1300.5 189 L1294.5 192.5Z" fill="#e6e6e6"/>
<rect x="1307" y="180" width="19" height="18" rx="4" fill="#5a6d91" opacity="0.8"/>
<path d="M1309.5 182.5 H1323.5 L1316.5 195.5Z" fill="#e89a4c"/><path d="M1313.5 185.5 H1319.5 L1316.5 191.5Z" fill="#4a5d85"/><path d="M1399 184 H1411 L1405 195Z" fill="none" stroke="#2ec49a" stroke-width="1.3"/><rect x="1397.5" y="182.5" width="3" height="3" fill="#334d80" stroke="#2ec49a" stroke-width="1"/><rect x="1409.5" y="182.5" width="3" height="3" fill="#334d80" stroke="#2ec49a" stroke-width="1"/><rect x="1403.5" y="193.5" width="3" height="3" fill="#334d80" stroke="#2ec49a" stroke-width="1"/><path d="M1451.5 189 Q1458.0 182 1464.5 189 Q1458.0 196 1451.5 189Z" fill="#e6e6e6"/><circle cx="1458.0" cy="189" r="2.6" fill="#334d80"/><circle cx="1458.0" cy="189" r="1.3" fill="#e6e6e6"/><path d="M1471 185 H1474 L1475.5 182.5 H1480.5 L1482 185 H1485 V195 H1471Z" fill="#e6e6e6"/><circle cx="1478" cy="190" r="3.6" fill="#334d80"/><circle cx="1478" cy="190" r="2.4" fill="#e6e6e6"/><circle cx="1478" cy="190" r="1.2" fill="#334d80"/>
<!-- donut -->
<path d="M1294.5 205.5 L1300.5 209 L1294.5 212.5Z" fill="#bbb"/><path d="M1309.5 202.5 H1323.5 L1316.5 215.5Z" fill="#e89a4c"/><path d="M1313.5 205.5 H1319.5 L1316.5 211.5Z" fill="#282828"/><path d="M1386.5 215 L1391.5 210" stroke="#6a8ed8" stroke-width="1.8" stroke-linecap="round"/><circle cx="1393.5" cy="207.5" r="3.6" fill="none" stroke="#6a8ed8" stroke-width="1.4"/><path d="M1394 207 L1398 203 L1399 206.5 L1396 209Z" fill="#292929"/><path d="M1406 204 H1418 L1412 215Z" fill="none" stroke="#2ec49a" stroke-width="1.3"/><rect x="1404.5" y="202.5" width="3" height="3" fill="#282828" stroke="#2ec49a" stroke-width="1"/><rect x="1416.5" y="202.5" width="3" height="3" fill="#282828" stroke="#2ec49a" stroke-width="1"/><rect x="1410.5" y="213.5" width="3" height="3" fill="#282828" stroke="#2ec49a" stroke-width="1"/><path d="M1451.5 209 Q1458.0 202 1464.5 209 Q1458.0 216 1451.5 209Z" fill="#e6e6e6"/><circle cx="1458.0" cy="209" r="2.6" fill="#282828"/><circle cx="1458.0" cy="209" r="1.3" fill="#e6e6e6"/><path d="M1471 205 H1474 L1475.5 202.5 H1480.5 L1482 205 H1485 V215 H1471Z" fill="#e6e6e6"/><circle cx="1478" cy="210" r="3.6" fill="#282828"/><circle cx="1478" cy="210" r="2.4" fill="#e6e6e6"/><circle cx="1478" cy="210" r="1.2" fill="#282828"/>
<!-- icing -->
<path d="M1294.5 225.5 L1300.5 229 L1294.5 232.5Z" fill="#bbb"/><path d="M1309.5 222.5 H1323.5 L1316.5 235.5Z" fill="#e89a4c"/><path d="M1313.5 225.5 H1319.5 L1316.5 231.5Z" fill="#282828"/><path d="M1380.5 235 L1385.5 230" stroke="#6a8ed8" stroke-width="1.8" stroke-linecap="round"/><circle cx="1387.5" cy="227.5" r="3.6" fill="none" stroke="#6a8ed8" stroke-width="1.4"/><path d="M1388 227 L1392 223 L1393 226.5 L1390 229Z" fill="#292929"/><path d="M1399 224 H1411 L1405 235Z" fill="none" stroke="#2ec49a" stroke-width="1.3"/><rect x="1397.5" y="222.5" width="3" height="3" fill="#282828" stroke="#2ec49a" stroke-width="1"/><rect x="1409.5" y="222.5" width="3" height="3" fill="#282828" stroke="#2ec49a" stroke-width="1"/><rect x="1403.5" y="233.5" width="3" height="3" fill="#282828" stroke="#2ec49a" stroke-width="1"/><path d="M1451.5 229 Q1458.0 222 1464.5 229 Q1458.0 236 1451.5 229Z" fill="#e6e6e6"/><circle cx="1458.0" cy="229" r="2.6" fill="#282828"/><circle cx="1458.0" cy="229" r="1.3" fill="#e6e6e6"/><path d="M1471 225 H1474 L1475.5 222.5 H1480.5 L1482 225 H1485 V235 H1471Z" fill="#e6e6e6"/><circle cx="1478" cy="230" r="3.6" fill="#282828"/><circle cx="1478" cy="230" r="2.4" fill="#e6e6e6"/><circle cx="1478" cy="230" r="1.2" fill="#282828"/>
<!-- light -->
<path d="M1294.5 245.5 L1300.5 249 L1294.5 252.5Z" fill="#bbb"/>
<circle cx="1316.5" cy="246" r="5" fill="#e89a4c"/><rect x="1313.5" y="250" width="6" height="4" fill="#e89a4c"/><path d="M1314 246 L1316.5 248.5 L1319 246" stroke="#282828" fill="none" stroke-width="1"/>
<circle cx="1386" cy="248" r="5.5" fill="none" stroke="#2ec49a" stroke-width="1.3" stroke-dasharray="20 4"/><circle cx="1386" cy="248" r="1.3" fill="#2ec49a"/><path d="M1386 249 V256" stroke="#2ec49a" stroke-width="1.2" stroke-dasharray="2 1.5"/>
<path d="M1451.5 249 Q1458.0 242 1464.5 249 Q1458.0 256 1451.5 249Z" fill="#e6e6e6"/><circle cx="1458.0" cy="249" r="2.6" fill="#282828"/><circle cx="1458.0" cy="249" r="1.3" fill="#e6e6e6"/><path d="M1471 245 H1474 L1475.5 242.5 H1480.5 L1482 245 H1485 V255 H1471Z" fill="#e6e6e6"/><circle cx="1478" cy="250" r="3.6" fill="#282828"/><circle cx="1478" cy="250" r="2.4" fill="#e6e6e6"/><circle cx="1478" cy="250" r="1.2" fill="#282828"/>
<!-- plane -->
<path d="M1294.5 265.5 L1300.5 269 L1294.5 272.5Z" fill="#777"/><path d="M1309.5 262.5 H1323.5 L1316.5 275.5Z" fill="#8a5f37"/><path d="M1313.5 265.5 H1319.5 L1316.5 271.5Z" fill="#282828"/><path d="M1384 264 H1396 L1390 275Z" fill="none" stroke="#1d8a6d" stroke-width="1.3"/><rect x="1382.5" y="262.5" width="3" height="3" fill="#282828" stroke="#1d8a6d" stroke-width="1"/><rect x="1394.5" y="262.5" width="3" height="3" fill="#282828" stroke="#1d8a6d" stroke-width="1"/><rect x="1388.5" y="273.5" width="3" height="3" fill="#282828" stroke="#1d8a6d" stroke-width="1"/>
<path d="M1452 266 Q1458.5 272 1465 266" fill="none" stroke="#bbb" stroke-width="1.1"/>
<path d="M1471 265 H1474 L1475.5 262.5 H1480.5 L1482 265 H1485 V275 H1471Z" fill="#d0d0d0"/><circle cx="1478" cy="270" r="3.6" fill="#282828"/><circle cx="1478" cy="270" r="2.4" fill="#d0d0d0"/><circle cx="1478" cy="270" r="1.2" fill="#282828"/>
</svg>
<div class="t" style="left:1291px;top:123px;font-size:11.7px;color:#e0e0e0">Scene Collection</div>
<div class="t" style="left:1311px;top:143px;font-size:11.7px;color:#e6e6e6">Collection</div>
<div class="t" style="left:1331px;top:163px;font-size:11.7px;color:#6e6e6e">Camera</div>
<div class="t" style="left:1331px;top:183px;font-size:11.7px;color:#f0b040">Cylinder</div>
<div class="t" style="left:1331px;top:203px;font-size:11.7px;color:#e0e0e0">Donut</div>
<div class="t" style="left:1331px;top:223px;font-size:11.7px;color:#e0e0e0">Icing</div>
<div class="t" style="left:1331px;top:243px;font-size:11.7px;color:#e0e0e0">Light</div>
<div class="t" style="left:1331px;top:263px;font-size:11.7px;color:#7a7a7a">Plane</div>
<!-- properties -->
<div class="a" style="left:1248px;top:304px;width:248px;height:525px;background:#2e2e2e;border-radius:7px;overflow:hidden">
  <div class="a" style="left:0;top:0;width:248px;height:26px;background:#2e2e2e"></div>
  <div class="a" style="left:0;top:26px;width:27px;height:499px;background:#1f1f1f"></div>
</div>
<div class="btn" style="left:1255px;top:307px;width:31px;height:19px;background:#2e2e2e;box-shadow:inset 0 0 0 1px #383838"></div>
<div class="btn" style="left:1315px;top:307px;width:115px;height:18px;background:#1d1d1d;box-shadow:inset 0 0 0 1px #333"></div>
<div class="btn" style="left:1468px;top:307px;width:19px;height:19px;background:#2a2a2a;box-shadow:inset 0 0 0 1px #383838"></div>
<div class="a" style="left:1249px;top:587px;width:26px;height:26px;background:#2e2e2e;border-radius:5px 0 0 5px"></div>
<div class="btn" style="left:1284px;top:374px;width:204px;height:19px;background:#1e1e1e;box-shadow:inset 0 0 0 1px #363636"></div>
<div class="t" style="left:1291px;top:377px;font-size:11.7px;color:#e0e0e0">Add Modifier</div>
<div class="t" style="left:1310px;top:340px;font-size:11.7px;color:#e0e0e0">Cylinder</div>
<svg class="a" style="left:1248px;top:304px" width="248" height="525" viewBox="1248 304 248 525">
<rect x="1260" y="309.5" width="13.5" height="6" rx="3" fill="#e6e6e6"/><rect x="1260" y="317.5" width="13.5" height="6" rx="3" fill="#e6e6e6"/><rect x="1262" y="311" width="5" height="3" rx="1.5" fill="#2e2e2e"/><rect x="1266" y="319" width="6" height="3" rx="1.5" fill="#2e2e2e"/>
<path d="M1275 314 L1277.5 316.5 L1280 314" fill="none" stroke="#ccc" stroke-width="1.2"/>
<circle cx="1327" cy="314" r="4.5" fill="none" stroke="#d0d0d0" stroke-width="1.3"/><path d="M1324 317.5 L1320 322" stroke="#d0d0d0" stroke-width="1.3"/>
<path d="M1474 315 L1477 318 L1480 315" fill="none" stroke="#ccc" stroke-width="1.3"/>
<!-- object row -->
<path d="M1286 344 V341 H1289 M1298 341 H1301 V344 M1301 351 V354 H1298 M1289 354 H1286 V351" fill="none" stroke="#ccc" stroke-width="1"/>
<rect x="1289" y="344" width="9" height="8" fill="#e6e6e6"/>
<path d="M1471 354 L1476 349 M1474 344 L1481 351 M1476 343 L1482 349 L1479 350 L1475.5 346.5Z" stroke="#bbb" stroke-width="1.1" fill="none"/>
<path d="M1486 383 L1482.5 386.5 M1479 383 L1482.5 386.5" stroke="#ccc" stroke-width="1.3"/>
<!-- nav icons -->
<g fill="#d8d8d8">
<rect x="1257" y="344" width="2" height="8"/><circle cx="1258" cy="355" r="2.6"/><path d="M1264 344 Q1264 349 1266 350 V359 H1268 V350 Q1270 349 1270 344 L1268.5 344 V347 H1265.5 V344Z"/>
<rect x="1255" y="381" width="15" height="11" rx="1.5" fill="none" stroke="#d8d8d8" stroke-width="1.5"/><rect x="1266" y="384" width="3" height="6"/><circle cx="1267" cy="379.5" r="1"/>
<rect x="1255" y="409" width="15" height="4"/><path d="M1257 413 H1268 V420 H1257Z" fill="none" stroke="#d8d8d8" stroke-width="1.5"/><path d="M1259 419 L1262.5 415 L1266 419Z"/>
<rect x="1255" y="440" width="10" height="9" fill="#888"/><rect x="1257" y="438" width="10" height="9" fill="#aaa"/><rect x="1259" y="436" width="11" height="10" fill="#d8d8d8"/><path d="M1260 445 L1264 439 L1266.5 442.5 L1268 441 V445Z" fill="#444"/>
<path d="M1258 464 Q1255 470 1256 474 Q1258 477 1261 476 Q1262 470 1258 464Z"/><circle cx="1268.5" cy="465.5" r="2"/><circle cx="1265" cy="474" r="3.6" fill="none" stroke="#d8d8d8" stroke-width="1.4"/>
</g>
<circle cx="1262.5" cy="499.5" r="6.5" fill="#c05a6a"/><path d="M1259 495 Q1262 497 1260 500 Q1263 502 1262 505 M1265 494 Q1264 498 1267 500" stroke="#2a1a1e" stroke-width="1.2" fill="none"/>
<rect x="1255.5" y="529" width="14" height="3.5" fill="#d8d8d8"/><path d="M1256.5 534 H1268.5 V542 H1256.5Z" fill="none" stroke="#d8d8d8" stroke-width="1.4"/><rect x="1260.5" y="535.5" width="4" height="1.5" fill="#d8d8d8"/>
<path d="M1255 567 V564 H1258 M1267 564 H1270 V567 M1270 575 V578 H1267 M1258 578 H1255 V575" fill="none" stroke="#b87a40" stroke-width="1"/>
<rect x="1258" y="567" width="9" height="8" fill="#e89a4c"/>
<path d="M1256 606 L1263 599" stroke="#73a0f0" stroke-width="2.6" stroke-linecap="round"/><circle cx="1265" cy="596.5" r="4.3" fill="#73a0f0"/><path d="M1265.5 596 L1270 591.5 L1271.5 595.5 L1268 598Z" fill="#2e2e2e"/><circle cx="1265" cy="596.5" r="1.3" fill="#2e2e2e"/>
<g fill="#6a8ed8"><circle cx="1257" cy="621" r="2"/><circle cx="1267" cy="621" r="1.6"/><circle cx="1257" cy="632" r="1.6"/><circle cx="1267" cy="633" r="2"/></g>
<path d="M1257 621 H1267 M1257 621 V632 M1257 621 L1267 633" stroke="#6a8ed8" stroke-width="1.2"/>
<circle cx="1262" cy="656" r="5.5" fill="none" stroke="#6a8ed8" stroke-width="1.6" stroke-dasharray="26 6"/><circle cx="1263" cy="655" r="2.2" fill="#6a8ed8"/><circle cx="1267.5" cy="650.5" r="1.8" fill="#6a8ed8"/>
<path d="M1256 690 Q1254 682 1262 679 L1269 677 Q1270 684 1266 688 Q1261 692 1256 690Z" fill="none" stroke="#6a8ed8" stroke-width="1.6"/><circle cx="1261" cy="686" r="2" fill="none" stroke="#6a8ed8" stroke-width="1.4"/>
<path d="M1256 705 H1269 L1262.5 716Z" fill="none" stroke="#2ec49a" stroke-width="1.5"/><g fill="#1f1f1f" stroke="#2ec49a" stroke-width="1"><rect x="1254.5" y="703.5" width="3" height="3"/><rect x="1267.5" y="703.5" width="3" height="3"/><rect x="1261" y="714.5" width="3" height="3"/></g>
<circle cx="1262.5" cy="739" r="6.5" fill="#c05a6a"/><path d="M1262.5 732.5 V739 H1269 A6.5 6.5 0 0 0 1262.5 732.5Z" fill="#1f1f1f"/><path d="M1256 739 H1262.5 L1258 744Z" fill="#e9c0c6"/>
<g fill="#c05a6a"><rect x="1255" y="768" width="14" height="14"/></g>
<g fill="#1f1f1f"><rect x="1257" y="768" width="2" height="2"/><rect x="1261" y="768" width="2" height="2"/><rect x="1265" y="768" width="2" height="2"/><rect x="1255" y="770" width="2" height="2"/><rect x="1259" y="770" width="2" height="2"/><rect x="1263" y="770" width="2" height="2"/><rect x="1267" y="770" width="2" height="2"/><rect x="1257" y="772" width="2" height="2"/><rect x="1261" y="772" width="2" height="2"/><rect x="1265" y="772" width="2" height="2"/><rect x="1255" y="774" width="2" height="2"/><rect x="1259" y="774" width="2" height="2"/><rect x="1263" y="774" width="2" height="2"/><rect x="1267" y="774" width="2" height="2"/><rect x="1257" y="776" width="2" height="2"/><rect x="1261" y="776" width="2" height="2"/><rect x="1265" y="776" width="2" height="2"/><rect x="1255" y="778" width="2" height="2"/><rect x="1259" y="778" width="2" height="2"/><rect x="1263" y="778" width="2" height="2"/><rect x="1267" y="778" width="2" height="2"/><rect x="1257" y="780" width="2" height="2"/><rect x="1261" y="780" width="2" height="2"/><rect x="1265" y="780" width="2" height="2"/></g>
</svg>
<!-- node editor -->
<div class="a" style="left:57px;top:481px;width:1187px;height:348px;background:#1d1d1d;border-radius:7px;overflow:hidden"></div>
<svg class="a" style="left:57px;top:481px" width="1187" height="348" viewBox="57 481 1187 348">
<defs>
<pattern id="dots" x="64.7" y="522.8" width="27.5" height="27.5" patternUnits="userSpaceOnUse"><rect x="0" y="0" width="2" height="2" fill="#2a2a2a"/></pattern>
<filter id="nsh" x="-10%" y="-10%" width="120%" height="120%"><feGaussianBlur stdDeviation="1.5"/></filter>
</defs>
<rect x="57" y="506" width="1187" height="323" fill="url(#dots)"/>
<!-- header -->
<rect x="64" y="484.5" width="31.5" height="18.5" rx="4" fill="#232323" stroke="#333" stroke-width="1"/>
<g fill="#e0e0e0"><rect x="70" y="487" width="9" height="5.5" rx="1.5"/><rect x="68" y="495" width="9" height="5.5" rx="1.5"/></g>
<path d="M79 489.5 H81.5 V497.5 H77" fill="none" stroke="#bbb" stroke-width="1"/>
<path d="M85.5 492 L88 494.5 L90.5 492" fill="none" stroke="#ccc" stroke-width="1.2"/>
<rect x="516.7" y="484.7" width="221" height="18.7" rx="4" fill="#2a2a2a"/>
<rect x="516.7" y="484.7" width="31.6" height="18.7" rx="4" fill="#232323"/>
<rect x="548.3" y="484.7" width="128.2" height="18.7" fill="#1e1e1e"/>
<line x1="697" y1="485" x2="697" y2="503" stroke="#262626"/><line x1="717" y1="485" x2="717" y2="503" stroke="#262626"/>
<g fill="#888"><rect x="522" y="487.5" width="8" height="5" rx="1.3"/><rect x="521" y="495.5" width="8" height="5" rx="1.3"/></g>
<path d="M530.5 490 H533 V498 H529" fill="none" stroke="#777" stroke-width="1"/>
<path d="M538.5 493 L541 495.5 L543.5 493" fill="none" stroke="#666" stroke-width="1.1"/>
<path d="M680.8 489 L684.8 487.3 L688.8 489 V494.5 Q688.8 499 684.8 501.3 Q680.8 499 680.8 494.5Z" fill="none" stroke="#6f6f6f" stroke-width="1.2"/>
<path d="M703 488 H709 L712 491 V497.5 H703Z M701 490 V501 H709" fill="none" stroke="#6f6f6f" stroke-width="1.1"/>
<path d="M723.5 489.5 L731 497 M731 489.5 L723.5 497" stroke="#6f6f6f" stroke-width="1.1"/>
<path d="M747 500 L752 495 M750.5 489 L758 496.5 M753 487 L760 494 L756.5 495 L752 490.5Z" stroke="#f0f0f0" stroke-width="1.5" fill="#f0f0f0"/>
<rect x="1115" y="484.3" width="19.6" height="19.3" rx="4" fill="#2a2a2a"/>
<path d="M1121 490 L1124 487 L1127 490 M1124 487 V499 H1130" fill="none" stroke="#5a5a5a" stroke-width="1.2"/>
<rect x="1140.4" y="484.3" width="51.2" height="19.3" rx="4" fill="#282828" stroke="#333" stroke-width="0.8"/>
<rect x="1140.4" y="484.3" width="19" height="19.3" rx="4" fill="#4a4a4a"/><rect x="1152" y="484.3" width="7.4" height="19.3" fill="#4a4a4a"/>
<path d="M1148 500 L1146 498 Q1143 494 1146 490 Q1150 487 1153 490 Q1155 493 1153 496 L1151 494 Q1152 492 1150.5 491 Q1148.5 490 1147.5 492 Q1147 494 1148.5 496Z" fill="none" stroke="#999" stroke-width="1"/>
<rect x="1163" y="487.5" width="4.5" height="4.5" fill="#e0e0e0"/>
<path d="M1163 495 H1175 M1163 499 H1175 M1166 493 V502 M1171 488 V502 M1167 490.5 H1175" stroke="#e0e0e0" stroke-width="1.1"/>
<path d="M1181 492 L1184 495 L1187 492" fill="none" stroke="#ccc" stroke-width="1.3"/>
<rect x="1197.4" y="484.3" width="39.6" height="19.3" rx="4" fill="#282828" stroke="#333" stroke-width="0.8"/>
<rect x="1197.4" y="484.3" width="19" height="19.3" rx="4" fill="#4772b3"/><rect x="1210" y="484.3" width="6.4" height="19.3" fill="#4772b3"/>
<circle cx="1205" cy="496" r="4.5" fill="none" stroke="#eee" stroke-width="1.2"/><circle cx="1208.5" cy="492" r="4.5" fill="#eee"/><path d="M1205 494 Q1207 491 1210.5 492" stroke="#4772b3" stroke-width="0.9" fill="none"/>
<path d="M1223 492 L1226 495 L1229 492" fill="none" stroke="#ccc" stroke-width="1.3"/>
<path d="M58 524.5 L61 528 L58 531.5" fill="none" stroke="#aaa" stroke-width="1.2"/>
<path d="M1244 521 h-3 a2 2 0 0 0 -2 2 v9 a2 2 0 0 0 2 2 h3Z" fill="#262626"/>
<path d="M1243 524.5 L1240 528 L1243 531.5" fill="none" stroke="#aaa" stroke-width="1.2"/>
<g fill="#e0e0e0"><rect x="79" y="522" width="8.5" height="5" rx="1.3"/><rect x="77" y="530" width="8.5" height="5" rx="1.3"/></g>
<path d="M87.5 524.5 H90 V532.5 H85.5" fill="none" stroke="#bbb" stroke-width="1"/>
<text x="97.9" y="531.9" font-family="Liberation Sans" font-size="12" fill="#e0e0e0" text-anchor="start" >Geometry Nodes.001</text><text x="108.5" y="497.4" font-family="Liberation Sans" font-size="12" fill="#e0e0e0" text-anchor="start" >View</text><text x="149.4" y="497.4" font-family="Liberation Sans" font-size="12" fill="#e0e0e0" text-anchor="start" >Select</text><text x="196.8" y="497.4" font-family="Liberation Sans" font-size="12" fill="#e0e0e0" text-anchor="start" >Add</text><text x="232.2" y="497.4" font-family="Liberation Sans" font-size="12" fill="#e0e0e0" text-anchor="start" >Node</text><text x="555.4" y="497.8" font-family="Liberation Sans" font-size="12" fill="#8a8a8a" text-anchor="start" >Geometry Nodes.001</text>
<!-- links -->
<path d="M478.2 547.8 C673.35 547.8 673.35 563.6 868.5 563.6" fill="none" stroke="#1bc39b" stroke-width="2.4"/><path d="M478.2 547.8 C506.195 547.8 501.105 661.2 529.1 661.2" fill="none" stroke="#1bc39b" stroke-width="2.4"/><path d="M645.6 593.2 C678.8 593.2 678.8 641.9 712 641.9" fill="none" stroke="#1bc39b" stroke-width="2.4"/><path d="M808 624.5 C838.25 624.5 838.25 563.6 868.5 563.6" fill="none" stroke="#1bc39b" stroke-width="2.4"/><path d="M964 546.2 C996.45 546.2 996.45 597.8 1028.9 597.8" fill="none" stroke="#1bc39b" stroke-width="2.4"/>
<!-- group input -->
<rect x="383.7" y="526.2" width="95.5" height="48.7" rx="3" fill="#000" opacity="0.35" filter="url(#nsh)"/><rect x="382.7" y="524.2" width="95.5" height="48.7" rx="3" fill="#303030"/><path d="M382.7 537.3000000000001 V527.2 Q382.7 524.2 385.7 524.2 H475.2 Q478.2 524.2 478.2 527.2 V537.3000000000001Z" fill="#1e1e1e"/><path d="M389.7 528.95 L392.7 531.95 L395.7 528.95" fill="none" stroke="#e0e0e0" stroke-width="1.1"/><text x="400.0" y="533.95" font-family="Liberation Sans" font-size="8.6" fill="#e6e6e6" text-anchor="start" textLength="46.1" lengthAdjust="spacingAndGlyphs">Group Input</text><text x="469.7" y="550.8" font-family="Liberation Sans" font-size="8.6" fill="#d8d8d8" text-anchor="end" >Geometry</text><circle cx="478.2" cy="547.8" r="3.6" fill="#00d6a3"/><circle cx="478.2" cy="563.3" r="3.4" fill="none" stroke="#8a8a8a" stroke-width="1.1"/>
<!-- join geometry -->
<rect x="869.9" y="525.3" width="95.1" height="49.7" rx="3" fill="#000" opacity="0.35" filter="url(#nsh)"/><rect x="868.9" y="523.3" width="95.1" height="49.7" rx="3" fill="#303030"/><path d="M868.9 535.5999999999999 V526.3 Q868.9 523.3 871.9 523.3 H961.0 Q964.0 523.3 964.0 526.3 V535.5999999999999Z" fill="#1e7a62"/><path d="M875.9 527.65 L878.9 530.65 L881.9 527.65" fill="none" stroke="#e0e0e0" stroke-width="1.1"/><text x="886.1999999999999" y="532.65" font-family="Liberation Sans" font-size="8.6" fill="#e6e6e6" text-anchor="start" textLength="53.8" lengthAdjust="spacingAndGlyphs">Join Geometry</text><text x="955.9" y="549.2" font-family="Liberation Sans" font-size="8.6" fill="#d8d8d8" text-anchor="end" >Geometry</text><circle cx="964" cy="546.2" r="3.6" fill="#00d6a3"/><text x="876" y="566.5" font-family="Liberation Sans" font-size="8.6" fill="#d8d8d8" text-anchor="start" >Geometry</text><rect x="866" y="557.6" width="5" height="12" rx="2.5" fill="#00d6a3"/>
<!-- group output -->
<rect x="1030.3" y="579.5" width="95.7" height="45.4" rx="3" fill="#000" opacity="0.35" filter="url(#nsh)"/><rect x="1029.3" y="577.5" width="95.7" height="45.4" rx="3" fill="#303030"/><path d="M1029.3 591.0 V580.5 Q1029.3 577.5 1032.3 577.5 H1122.0 Q1125.0 577.5 1125.0 580.5 V591.0Z" fill="#1e1e1e"/><path d="M1036.3 582.45 L1039.3 585.45 L1042.3 582.45" fill="none" stroke="#e0e0e0" stroke-width="1.1"/><text x="1046.6" y="587.45" font-family="Liberation Sans" font-size="8.6" fill="#e6e6e6" text-anchor="start" textLength="52.6" lengthAdjust="spacingAndGlyphs">Group Output</text><text x="1037" y="601.2" font-family="Liberation Sans" font-size="8.6" fill="#d8d8d8" text-anchor="start" >Geometry</text><circle cx="1028.9" cy="597.8" r="3.6" fill="#00d6a3"/><circle cx="1028.9" cy="613.2" r="3.4" fill="none" stroke="#8a8a8a" stroke-width="1.1"/>
<!-- distribute -->
<svg x="529.6" y="570" width="116" height="147" viewBox="529.6 570 116 147" overflow="hidden"><rect x="530.6" y="572" width="115.7" height="146.7" rx="3" fill="#000" opacity="0.35" filter="url(#nsh)"/><rect x="529.6" y="570" width="115.7" height="146.7" rx="3" fill="#303030"/><path d="M529.6 583 V573 Q529.6 570 532.6 570 H642.3000000000001 Q645.3000000000001 570 645.3000000000001 573 V583Z" fill="#1e7a62"/><path d="M536.6 574.7 L539.6 577.7 L542.6 574.7" fill="none" stroke="#e0e0e0" stroke-width="1.1"/><text x="546.9" y="579.7" font-family="Liberation Sans" font-size="8.6" fill="#e6e6e6" text-anchor="start" textLength="98" lengthAdjust="spacingAndGlyphs">Distribute Points on Faces</text></svg>
<text x="637" y="596.5" font-family="Liberation Sans" font-size="8.6" fill="#d8d8d8" text-anchor="end" >Points</text><circle cx="645.6" cy="593.2" r="3.6" fill="#00d6a3"/><text x="637" y="611.5" font-family="Liberation Sans" font-size="8.6" fill="#d8d8d8" text-anchor="end" >Normal</text><path d="M645.6 604.6 L649.4 608.4 L645.6 612.1999999999999 L641.8000000000001 608.4Z" fill="#6363c7"/><text x="637" y="626.5" font-family="Liberation Sans" font-size="8.6" fill="#d8d8d8" text-anchor="end" >Rotation</text><path d="M645.6 619.4000000000001 L649.4 623.2 L645.6 627.0 L641.8000000000001 623.2Z" fill="#6363c7"/>
<rect x="536.3" y="638.4" width="102" height="12.1" rx="2.5" fill="#232323" stroke="#2a2a2a" stroke-width="0.8"/>
<text x="542" y="647.7" font-family="Liberation Sans" font-size="8.6" fill="#d8d8d8" text-anchor="start" >Random</text><path d="M630 643 L632.5 645.5 L635 643" fill="none" stroke="#ccc" stroke-width="1"/><circle cx="529.1" cy="661.2" r="3.6" fill="#00d6a3"/><text x="536.9" y="664.5" font-family="Liberation Sans" font-size="8.6" fill="#d8d8d8" text-anchor="start" >Mesh</text><path d="M529.1 672.8000000000001 L532.9 676.6 L529.1 680.4 L525.3000000000001 676.6Z" fill="#cca6d6"/><path d="M529.1 675.2 L530.5 676.6 L529.1 678.0 L527.7 676.6Z" fill="#303030"/><text x="536.9" y="679.9" font-family="Liberation Sans" font-size="8.6" fill="#d8d8d8" text-anchor="start" >Selection</text>
<rect x="536.3" y="685.7" width="102" height="12.2" rx="2.5" fill="#545454"/>
<rect x="536.3" y="700.8" width="102" height="12.6" rx="2.5" fill="#545454"/>
<path d="M529.1 687.7 L532.9 691.5 L529.1 695.3 L525.3000000000001 691.5Z" fill="#a1a1a1"/><path d="M529.1 690.1 L530.5 691.5 L529.1 692.9 L527.7 691.5Z" fill="#303030"/><text x="547" y="694.9" font-family="Liberation Sans" font-size="8.6" fill="#d8d8d8" text-anchor="start" >Density</text><text x="628.7" y="694.9" font-family="Liberation Sans" font-size="8.6" fill="#d8d8d8" text-anchor="end" >0.000</text><circle cx="529.1" cy="707" r="3.6" fill="#598c5c"/><text x="547" y="710.2" font-family="Liberation Sans" font-size="8.6" fill="#d8d8d8" text-anchor="start" >Seed</text><text x="628.7" y="710.2" font-family="Liberation Sans" font-size="8.6" fill="#d8d8d8" text-anchor="end" >0</text>
<!-- instance on points -->
<rect x="713" y="603" width="95.5" height="223.8" rx="3" fill="#000" opacity="0.35" filter="url(#nsh)"/><rect x="712" y="601" width="95.5" height="223.8" rx="3" fill="#303030"/><path d="M712 614.6 V604 Q712 601 715 601 H804.5 Q807.5 601 807.5 604 V614.6Z" fill="#1e7a62"/><path d="M719 606.0 L722 609.0 L725 606.0" fill="none" stroke="#e0e0e0" stroke-width="1.1"/><text x="729.3" y="611.0" font-family="Liberation Sans" font-size="8.6" fill="#e6e6e6" text-anchor="start" textLength="69.5" lengthAdjust="spacingAndGlyphs">Instance on Points</text><text x="799" y="627.8" font-family="Liberation Sans" font-size="8.6" fill="#d8d8d8" text-anchor="end" >Instances</text><circle cx="808" cy="624.5" r="3.6" fill="#00d6a3"/><circle cx="712" cy="641.9" r="3.6" fill="#00d6a3"/><text x="719.8" y="645.2" font-family="Liberation Sans" font-size="8.6" fill="#d8d8d8" text-anchor="start" >Points</text><path d="M712 653.2 L715.8 657 L712 660.8 L708.2 657Z" fill="#cca6d6"/><path d="M712 655.6 L713.4 657 L712 658.4 L710.6 657Z" fill="#303030"/><text x="719.8" y="660.3" font-family="Liberation Sans" font-size="8.6" fill="#d8d8d8" text-anchor="start" >Selection</text><circle cx="712" cy="672.2" r="3.6" fill="#00d6a3"/><text x="719.8" y="675.5" font-family="Liberation Sans" font-size="8.6" fill="#d8d8d8" text-anchor="start" >Instance</text><path d="M712 683.5 L715.8 687.3 L712 691.0999999999999 L708.2 687.3Z" fill="#cca6d6"/><path d="M712 685.9 L713.4 687.3 L712 688.6999999999999 L710.6 687.3Z" fill="#303030"/><rect x="719" y="682.6" width="9.4" height="9.4" rx="2" fill="#545454"/><text x="731" y="690.6" font-family="Liberation Sans" font-size="8.6" fill="#d8d8d8" text-anchor="start" >Pick Instance</text><path d="M712 698.2 L715.8 702 L712 705.8 L708.2 702Z" fill="#598c5c"/><text x="719.8" y="705.3" font-family="Liberation Sans" font-size="8.6" fill="#d8d8d8" text-anchor="start" >Instance Index</text><text x="719.8" y="720.2" font-family="Liberation Sans" font-size="8.6" fill="#d8d8d8" text-anchor="start" >Rotation:</text>
<rect x="719.3" y="725.4" width="80.9" height="39.2" rx="2.5" fill="#545454"/>
<line x1="719.3" y1="738.1" x2="800.2" y2="738.1" stroke="#3a3a3a" stroke-width="0.8"/><line x1="719.3" y1="751.4" x2="800.2" y2="751.4" stroke="#3a3a3a" stroke-width="0.8"/>
<path d="M712 734.1 L715.8 737.9 L712 741.6999999999999 L708.2 737.9Z" fill="#6363c7"/><path d="M712 736.5 L713.4 737.9 L712 739.3 L710.6 737.9Z" fill="#303030"/><text x="729" y="734.8" font-family="Liberation Sans" font-size="8.6" fill="#d8d8d8" text-anchor="start" >X</text><text x="729" y="748" font-family="Liberation Sans" font-size="8.6" fill="#d8d8d8" text-anchor="start" >Y</text><text x="729" y="761.5" font-family="Liberation Sans" font-size="8.6" fill="#d8d8d8" text-anchor="start" >Z</text><text x="790.5" y="734.8" font-family="Liberation Sans" font-size="8.6" fill="#d8d8d8" text-anchor="end" >0°</text><text x="790.5" y="748" font-family="Liberation Sans" font-size="8.6" fill="#d8d8d8" text-anchor="end" >0°</text><text x="790.5" y="761.5" font-family="Liberation Sans" font-size="8.6" fill="#d8d8d8" text-anchor="end" >0°</text><text x="719.8" y="777" font-family="Liberation Sans" font-size="8.6" fill="#d8d8d8" text-anchor="start" >Scale:</text>
<rect x="719.3" y="782" width="80.9" height="38.9" rx="2.5" fill="#545454"/>
<line x1="719.3" y1="794.7" x2="800.2" y2="794.7" stroke="#3a3a3a" stroke-width="0.8"/><line x1="719.3" y1="808" x2="800.2" y2="808" stroke="#3a3a3a" stroke-width="0.8"/>
<path d="M712 790.6 L715.8 794.4 L712 798.1999999999999 L708.2 794.4Z" fill="#6363c7"/><path d="M712 793.0 L713.4 794.4 L712 795.8 L710.6 794.4Z" fill="#303030"/><text x="729" y="791.3" font-family="Liberation Sans" font-size="8.6" fill="#d8d8d8" text-anchor="start" >X</text><text x="729" y="804.5" font-family="Liberation Sans" font-size="8.6" fill="#d8d8d8" text-anchor="start" >Y</text><text x="729" y="818" font-family="Liberation Sans" font-size="8.6" fill="#d8d8d8" text-anchor="start" >Z</text><text x="790.5" y="791.3" font-family="Liberation Sans" font-size="8.6" fill="#d8d8d8" text-anchor="end" >1.000</text><text x="790.5" y="804.5" font-family="Liberation Sans" font-size="8.6" fill="#d8d8d8" text-anchor="end" >1.000</text><text x="790.5" y="818" font-family="Liberation Sans" font-size="8.6" fill="#d8d8d8" text-anchor="end" >1.000</text>
<!-- object info -->
<rect x="373.6" y="638.8" width="96" height="132.6" rx="3" fill="#000" opacity="0.35" filter="url(#nsh)"/><rect x="372.6" y="636.8" width="96" height="132.6" rx="3" fill="#303030"/><path d="M372.6 651.0 V639.8 Q372.6 636.8 375.6 636.8 H465.6 Q468.6 636.8 468.6 639.8 V651.0Z" fill="#86334f"/><rect x="372.6" y="636.8" width="96" height="132.6" rx="3" fill="none" stroke="#f0f0f0" stroke-width="1.4"/><path d="M379.6 642.1 L382.6 645.1 L385.6 642.1" fill="none" stroke="#e0e0e0" stroke-width="1.1"/><text x="389.90000000000003" y="647.1" font-family="Liberation Sans" font-size="8.6" fill="#e6e6e6" text-anchor="start" textLength="41.4" lengthAdjust="spacingAndGlyphs">Object Info</text><text x="460" y="664.4" font-family="Liberation Sans" font-size="8.6" fill="#d8d8d8" text-anchor="end" >Location</text><circle cx="468.6" cy="661" r="3.6" fill="#6363c7"/><text x="460" y="679.5" font-family="Liberation Sans" font-size="8.6" fill="#d8d8d8" text-anchor="end" >Rotation</text><circle cx="468.6" cy="676" r="3.6" fill="#6363c7"/><text x="460" y="694.6" font-family="Liberation Sans" font-size="8.6" fill="#d8d8d8" text-anchor="end" >Scale</text><circle cx="468.6" cy="691" r="3.6" fill="#6363c7"/><text x="460" y="709.7" font-family="Liberation Sans" font-size="8.6" fill="#d8d8d8" text-anchor="end" >Geometry</text><circle cx="468.6" cy="706.2" r="3.6" fill="#00d6a3"/>
<rect x="380.3" y="721" width="80.2" height="11.7" rx="2.5" fill="#545454"/>
<path d="M382.8 721 H419.5 V732.7 H382.8 A2.5 2.5 0 0 1 380.3 730.2 V723.5 A2.5 2.5 0 0 1 382.8 721Z" fill="#4772b3"/>
<text x="400" y="730.2" font-family="Liberation Sans" font-size="8.6" fill="#e6e6e6" text-anchor="middle" >Original</text><text x="440" y="730.2" font-family="Liberation Sans" font-size="8.6" fill="#d8d8d8" text-anchor="middle" >Relative</text>
<rect x="380.3" y="737.5" width="80.2" height="12.5" rx="2.5" fill="#1e1e1e" stroke="#282828" stroke-width="0.8"/>
<path d="M383 741.5 V739.5 H385 M390.5 739.5 H392.5 V741.5 M392.5 746 V748 H390.5 M385 748 H383 V746" fill="none" stroke="#bbb" stroke-width="0.8"/>
<rect x="385" y="741.5" width="5.5" height="4.5" fill="#e6e6e6"/>
<text x="397.7" y="746.8" font-family="Liberation Sans" font-size="8.6" fill="#d8d8d8" text-anchor="start" >Cylinder</text>
<path d="M450.5 741 L455.5 746 M455.5 741 L450.5 746" stroke="#ccc" stroke-width="0.9"/>
<circle cx="372.2" cy="743.7" r="3.6" fill="#ed9e5c"/><circle cx="372.2" cy="759.2" r="3.6" fill="#cca6d6"/><rect x="380.3" y="754.7" width="8.7" height="9.3" rx="2" fill="#545454"/><text x="392" y="762.5" font-family="Liberation Sans" font-size="8.6" fill="#d8d8d8" text-anchor="start" >As Instance</text>
</svg>
<!-- status bar -->
<div class="a" style="left:56px;top:831px;width:1440px;height:20px;background:#1d1d1d"></div>
<svg class="a" style="left:56px;top:829px" width="1440" height="22" viewBox="56 829 1440 22">
<rect x="68.1" y="833.1" width="9.5" height="14" rx="4.5" fill="none" stroke="#bdbdbd" stroke-width="1.2"/><path d="M72.85 833.5 V838.5" stroke="#bdbdbd" stroke-width="1"/><rect x="71.5" y="835.5" width="2.8" height="4.5" rx="1.2" fill="#bdbdbd"/><rect x="150.1" y="833.1" width="9.5" height="14" rx="4.5" fill="none" stroke="#bdbdbd" stroke-width="1.2"/><path d="M154.85 833.5 V838.5" stroke="#bdbdbd" stroke-width="1"/><path d="M150.7 838.5 V837.0 Q150.7 833.7 154.5 833.7 V838.5Z" fill="#bdbdbd"/><path d="M162.5 834.0 V839.5 M165.0 834.0 V839.5" stroke="#bdbdbd" stroke-width="1"/><rect x="312.6" y="833.1" width="9.5" height="14" rx="4.5" fill="none" stroke="#bdbdbd" stroke-width="1.2"/><path d="M317.35 833.5 V838.5" stroke="#bdbdbd" stroke-width="1"/><rect x="316" y="835.5" width="2.8" height="4.5" rx="1.2" fill="#bdbdbd"/><rect x="555.6" y="833.1" width="9.5" height="14" rx="4.5" fill="none" stroke="#bdbdbd" stroke-width="1.2"/><path d="M560.35 833.5 V838.5" stroke="#bdbdbd" stroke-width="1"/><path d="M556.2 838.5 V837.0 Q556.2 833.7 560 833.7 V838.5Z" fill="#bdbdbd"/><path d="M568 834.0 V839.5 M570.5 834.0 V839.5" stroke="#bdbdbd" stroke-width="1"/>
</svg>
<div class="t" style="left:90px;top:833.5px;font-size:11.6px;color:#bdbdbd">Pan View</div>
<div class="t" style="left:173.5px;top:833.5px;font-size:11.6px;color:#bdbdbd">Box Select</div>
<div class="t" style="left:334.7px;top:833.5px;font-size:11.6px;color:#bdbdbd">Dolly View</div>
<div class="t" style="left:579px;top:833.5px;font-size:11.6px;color:#bdbdbd">Lasso Select</div>
<div class="t" style="left:1459.5px;top:833.5px;font-size:12.2px;color:#a0a0a0">3.0.0</div>
</div></div>
<!-- annotation -->
<svg class="a" style="left:0;top:0" width="1552" height="925" viewBox="0 0 1552 925">
<line x1="931" y1="320" x2="421" y2="604" stroke="#e8442a" stroke-width="2.6"/>
<path d="M415.2 610.5 L422.7 599 L428.9 609.6Z" fill="#e8442a" stroke="#e8442a" stroke-width="1.5" stroke-linejoin="round"/>
<line x1="1013.7" y1="264" x2="1216" y2="214.5" stroke="#e8442a" stroke-width="2.6"/>
<path d="M1225 212.3 L1211.3 209.8 L1214.2 221.5Z" fill="#e8442a" stroke="#e8442a" stroke-width="1.5" stroke-linejoin="round"/>
<rect x="1240" y="175" width="258" height="33" fill="none" stroke="#e8442a" stroke-width="2.2"/>
</svg>
<div class="t" style="left:860px;top:270px;font-size:17px;line-height:20.5px;color:#e8442a">Click on our sprinkle, and drag to
the Geometry Nodes view</div>

</body></html>
